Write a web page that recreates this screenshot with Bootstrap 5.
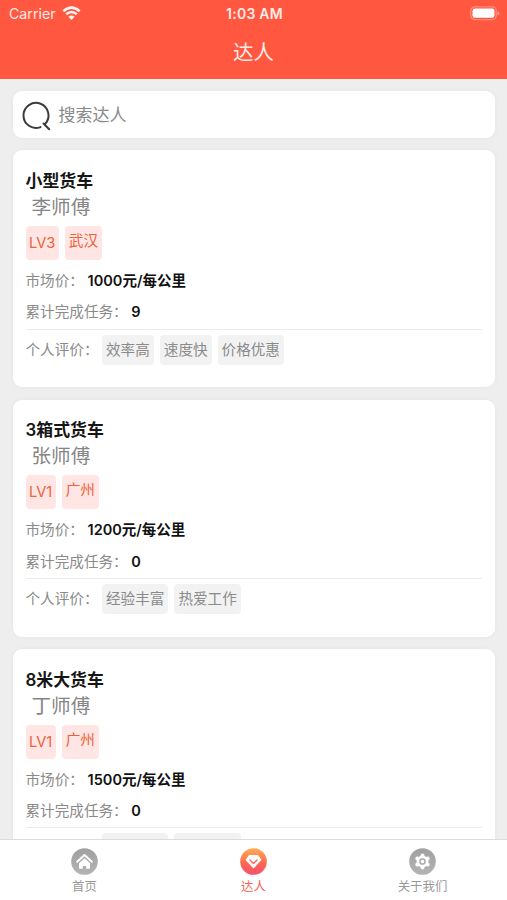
<!DOCTYPE html>
<html lang="zh-CN">
<head>
<meta charset="utf-8">
<meta name="viewport" content="width=device-width, initial-scale=1">
<title>达人</title>
<link href="https://cdn.jsdelivr.net/npm/bootstrap@5.3.0/dist/css/bootstrap.min.css" rel="stylesheet">
<style>
body{font-family:Inter,"Noto Sans CJK SC",sans-serif;background:#eeeeef;color:#8a8a8a;font-size:14.6px;height:900px}
.app-top{background:#ff5740;height:79px;color:#ffece6}
.status-line{height:27px;font-size:14.2px;padding:0 7px 0 9px;display:grid;grid-template-columns:1fr auto 1fr}
.clock{font-size:14px;font-weight:600;letter-spacing:.25px}
.wifi{margin-left:6px}
.page-title{font-size:20.5px;line-height:30px;margin-top:11px}
.feed{padding:12px 12.5px 0 13px}
.search-box,.driver{background:#fff;border-radius:9px;box-shadow:0 0 5px rgba(0,0,0,.045)}
.search-box{height:47px;padding-left:8px;font-size:17px}
.search-box svg{margin-top:2px}
.search-box span{margin:3px 0 0 5.5px}
.driver{height:237px;margin-top:12.3px;padding:18.7px 12.5px 0}
.driver h2{font-size:16.9px;line-height:25px;font-weight:600;color:#161616}
.driver-name{font-size:19.6px;line-height:26px;padding-left:6px;color:#858585}
.tags{height:34px;margin-top:6px;gap:6px;color:#ec6239}
.tags span{background:#ffe6e5;border-radius:4px;padding:0 3.5px;line-height:34px}
.tags span+span{line-height:31px;padding:0 4px}
.fact{line-height:31.5px;height:31.5px}
.fact b{font-weight:600;color:#111;font-size:14.5px;margin-left:3.7px}
.fact-first{margin-top:5px}
.review{border-top:1px solid #ececec;margin-top:.8px;padding-top:5px;line-height:30px}
.tag-list{gap:6px;margin-left:3.5px}
.tag-list span{background:#f2f2f2;border-radius:4px;padding:0 4px;height:30px}
.tabbar{height:61px;background:#fff;border-top:1px solid #dcdcdc;font-size:12.4px;color:#999}
.tabbar a{color:inherit;line-height:18px;padding-top:8px}
.tabbar svg{margin-bottom:3px}
.tabbar a.active{color:#fb6350}
</style>
</head>
<body class="d-flex flex-column overflow-hidden">
<header class="app-top flex-shrink-0">
  <div class="status-line align-items-center">
    <div class="d-flex align-items-center"><span>Carrier</span>
      <svg class="wifi" width="19" height="15" viewBox="0 0 19 15" fill="none" stroke="#fff4f0" stroke-width="2.5"><path d="M1.3 5.2Q9.5-2 17.7 5.2M4.2 8.3Q9.5 3.8 14.8 8.3"/><path d="M6.4 10.7Q9.5 8.2 12.6 10.7L9.5 14Z" fill="#fff4f0" stroke="none"/></svg>
    </div>
    <span class="clock">1:03 AM</span>
    <svg class="ms-auto" width="30" height="15" viewBox="0 0 30 15"><rect x=".8" y=".8" width="25.5" height="12.8" rx="4" fill="none" stroke="#ff8d7b" stroke-width="1.3"/><rect x="2.5" y="2.6" width="22" height="9.2" rx="2.3" fill="#fff"/><path d="M27.5 5v4.5q2-.7 2-2.25T27.5 5Z" fill="#ff9c8b"/></svg>
  </div>
  <h1 class="page-title text-center fw-normal mb-0">达人</h1>
</header>
<main class="feed flex-grow-1 overflow-hidden">
  <div class="search-box d-flex align-items-center">
    <svg width="32" height="32" viewBox="0 0 32 32" fill="none" stroke="#3b3b3f" stroke-width="2" stroke-linecap="round"><path d="M19.5 27.1A12.5 12.5 0 1 1 24.2 23.9M22.5 23.5L28.2 29.3"/></svg>
    <span>搜索达人</span>
  </div>
  <article class="driver">
    <h2 class="mb-0">小型货车</h2>
    <div class="driver-name">李师傅</div>
    <div class="tags d-flex"><span>LV3</span><span>武汉</span></div>
    <div class="fact fact-first">市场价：<b>1000元/每公里</b></div>
    <div class="fact">累计完成任务：<b>9</b></div>
    <div class="review d-flex">个人评价：<div class="tag-list d-flex"><span>效率高</span><span>速度快</span><span>价格优惠</span></div></div>
  </article>
  <article class="driver">
    <h2 class="mb-0">3箱式货车</h2>
    <div class="driver-name">张师傅</div>
    <div class="tags d-flex"><span>LV1</span><span>广州</span></div>
    <div class="fact fact-first">市场价：<b>1200元/每公里</b></div>
    <div class="fact">累计完成任务：<b>0</b></div>
    <div class="review d-flex">个人评价：<div class="tag-list d-flex"><span>经验丰富</span><span>热爱工作</span></div></div>
  </article>
  <article class="driver">
    <h2 class="mb-0">8米大货车</h2>
    <div class="driver-name">丁师傅</div>
    <div class="tags d-flex"><span>LV1</span><span>广州</span></div>
    <div class="fact fact-first">市场价：<b>1500元/每公里</b></div>
    <div class="fact">累计完成任务：<b>0</b></div>
    <div class="review d-flex">个人评价：<div class="tag-list d-flex"><span>经验丰富</span><span>热爱工作</span></div></div>
  </article>
</main>
<nav class="tabbar row g-0 flex-shrink-0 text-center">
  <a class="col d-flex flex-column align-items-center text-decoration-none" href="#">
    <svg width="27" height="27" viewBox="0 0 27 27"><defs><linearGradient id="gray" x2="0" y2="1"><stop stop-color="#a0a0a0"/><stop offset="1" stop-color="#b4b4b4"/></linearGradient></defs><circle cx="13.5" cy="13.5" r="13.3" fill="url(#gray)"/><path d="M6.2 13.7L13.5 7l7.3 6.7" fill="none" stroke="#fff" stroke-width="2" stroke-linecap="round" stroke-linejoin="round"/><path d="M13.5 10.2l5.5 5v4.6q0 1-1 1h-2.8v-2.7h-3.4v2.7H9q-1 0-1-1v-4.6Z" fill="#fff"/></svg>首页</a>
  <a class="col active d-flex flex-column align-items-center text-decoration-none" href="#">
    <svg width="27" height="27" viewBox="0 0 27 27"><defs><linearGradient id="hot" x2="0" y2="1"><stop stop-color="#ffad55"/><stop offset=".6" stop-color="#fb6652"/><stop offset="1" stop-color="#f94d70"/></linearGradient></defs><circle cx="13.5" cy="13.5" r="13.3" fill="url(#hot)"/><path d="M9.5 7.8h8l3 4-7 7.7-7-7.7Z" fill="#fff" stroke="#fff" stroke-width="1.5" stroke-linejoin="round"/><path d="M10 12l3.5 3.4L17 12" fill="none" stroke="#fb6852" stroke-width="1.4" stroke-linecap="round" stroke-linejoin="round"/></svg>达人</a>
  <a class="col d-flex flex-column align-items-center text-decoration-none" href="#">
    <svg width="27" height="27" viewBox="0 0 27 27"><circle cx="13.5" cy="13.5" r="13.3" fill="url(#gray)"/><circle cx="13.5" cy="13.5" r="5.9" fill="#fff"/><path d="M13.5 7.5v12M8.3 10.5l10.4 6M8.3 16.5l10.4-6" stroke="#fff" stroke-width="4" stroke-linecap="round"/><circle cx="13.5" cy="13.5" r="2.6" fill="#fff" stroke="#aaa" stroke-width="1.5"/></svg>关于我们</a>
</nav>
<script src="https://cdn.jsdelivr.net/npm/bootstrap@5.3.0/dist/js/bootstrap.bundle.min.js"></script>
</body>
</html>
